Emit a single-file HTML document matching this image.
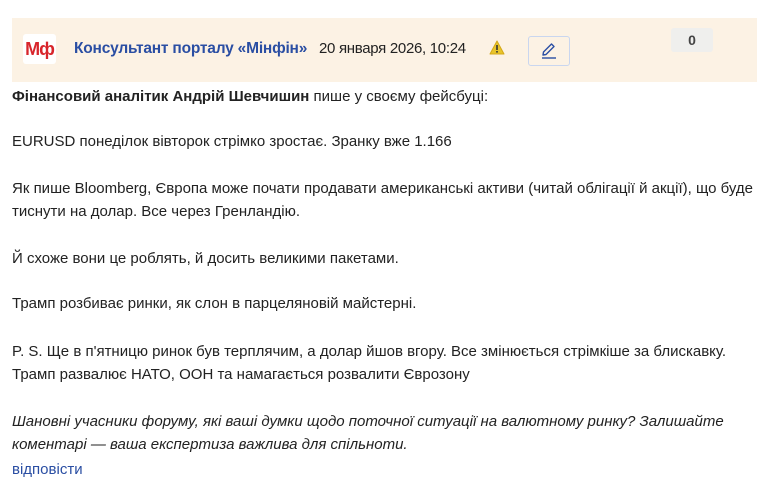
<!DOCTYPE html>
<html><head><meta charset="utf-8"><style>
body{margin:0;background:#fff;font-family:"Liberation Sans",sans-serif;color:#222;font-size:15px;letter-spacing:0;width:768px;height:502px;overflow:hidden;position:relative}
.band{position:absolute;left:12px;top:18px;width:745px;height:64px;background:#fcf2e4}
.logo{position:absolute;left:23px;top:34px;width:33px;height:30px;background:#fff;border-radius:3px;color:#d8252b;font-weight:bold;font-size:18px;line-height:30px;text-align:center;letter-spacing:-1px}
.name{position:absolute;left:74px;top:40px;color:#2a4ea3;font-weight:bold;font-size:15.5px;letter-spacing:-0.2px}
.date{position:absolute;left:319px;top:40px;color:#222;font-size:15px;letter-spacing:-0.3px}
.warn{position:absolute;left:489px;top:40px}
.edit{position:absolute;left:528px;top:36px;width:40px;height:28px;border:1px solid #c9d6ef;border-radius:3px;background:#fcf2e4}
.cnt{position:absolute;left:671px;top:28px;width:42px;height:24px;background:#efefed;border-radius:3px;text-align:center;line-height:24px;font-weight:bold;color:#444;font-size:14px}
p{position:absolute;left:12px;margin:0;line-height:23px;white-space:nowrap}
a{color:#2a4ea3;text-decoration:none}
</style></head><body>
<div class="band"></div>
<div class="logo">Мф</div>
<div class="name">Консультант порталу «Мінфін»</div>
<div class="date">20 января 2026, 10:24</div>
<svg class="warn" width="16" height="15" viewBox="0 0 16 15"><path d="M8 1 L15 14 L1 14 Z" fill="#e8c42a" stroke="#d4a817" stroke-linejoin="round"/><rect x="7.2" y="5" width="1.6" height="5" fill="#333"/><rect x="7.2" y="11" width="1.6" height="1.6" fill="#333"/></svg>
<div class="edit"><svg width="40" height="28" viewBox="0 0 40 28"><path d="M14 18 L14.5 15 L22.5 7 L25 9.5 L17 17.5 Z" fill="none" stroke="#2a4ea3" stroke-width="1.4" stroke-linejoin="round"/><path d="M13 21 H27" stroke="#2a4ea3" stroke-width="1.4"/></svg></div>
<div class="cnt">0</div>
<p style="top:85px"><b>Фінансовий аналітик Андрій Шевчишин</b> пише у своєму фейсбуці:</p>
<p style="top:130px">EURUSD понеділок вівторок стрімко зростає. Зранку вже 1.166</p>
<p style="top:177px">Як пише Bloomberg, Європа може почати продавати американські активи (читай облігації й акції), що буде<br>тиснути на долар. Все через Гренландію.</p>
<p style="top:247px">Й схоже вони це роблять, й досить великими пакетами.</p>
<p style="top:292px">Трамп розбиває ринки, як слон в парцеляновій майстерні.</p>
<p style="top:340px">P. S. Ще в п'ятницю ринок був терплячим, а долар йшов вгору. Все змінюється стрімкіше за блискавку.<br>Трамп развалює НАТО, ООН та намагається розвалити Єврозону</p>
<p style="top:410px"><i>Шановні учасники форуму, які ваші думки щодо поточної ситуації на валютному ринку? Залишайте<br>коментарі — ваша експертиза важлива для спільноти.</i></p>
<p style="top:458px"><a>відповісти</a></p>
</body></html>
